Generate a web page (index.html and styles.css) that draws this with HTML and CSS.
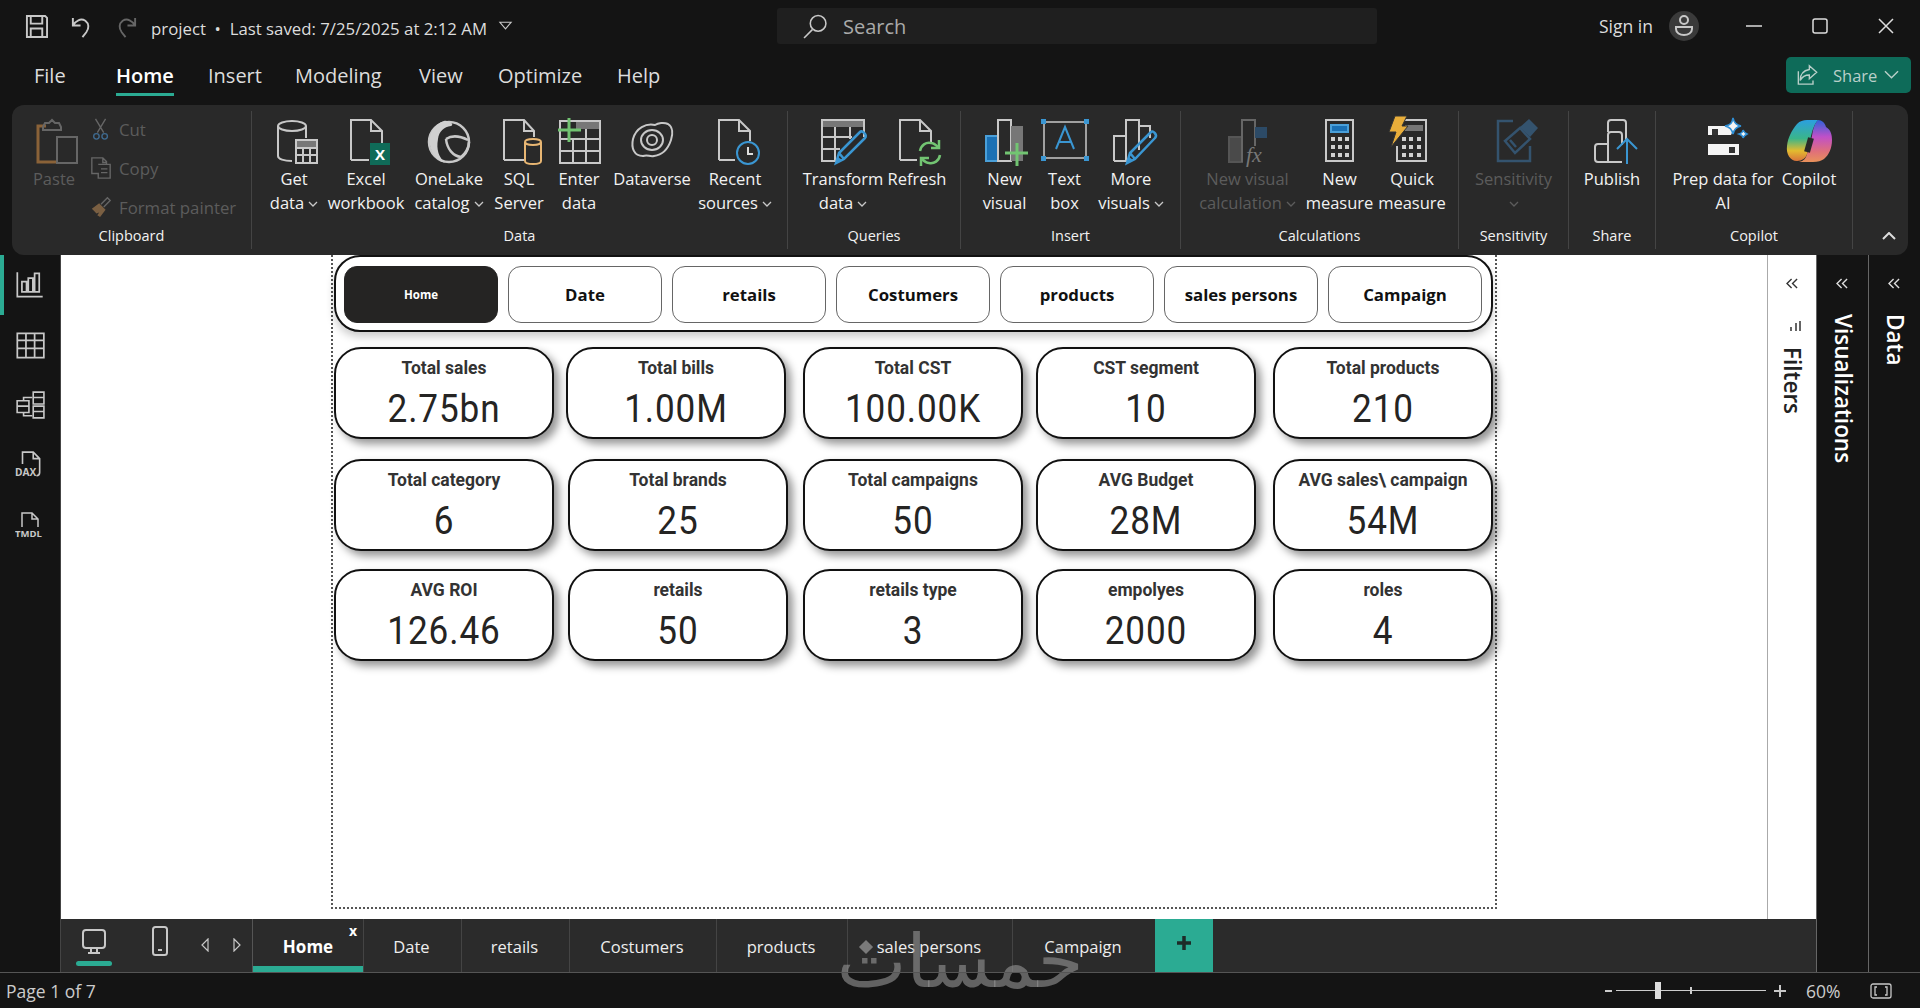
FILE: index.html
```html
<!DOCTYPE html>
<html lang="en">
<head>
  <meta charset="UTF-8">
  <title>project - Power BI Desktop</title>
  <link rel="stylesheet" href="styles.css">
</head>
<body>
  <svg class="defs" width="0" height="0">
    <defs>
      <linearGradient id="copA" x1="0" y1="0" x2="0" y2="1">
        <stop offset="0" stop-color="#2b9fe0"/><stop offset=".45" stop-color="#3ab58a"/><stop offset=".75" stop-color="#e3bb2f"/><stop offset="1" stop-color="#d9743c"/>
      </linearGradient>
      <linearGradient id="copB" x1="0" y1="0" x2="0" y2="1">
        <stop offset="0" stop-color="#2f62d8"/><stop offset=".4" stop-color="#c050c8"/><stop offset=".75" stop-color="#e0707a"/><stop offset="1" stop-color="#e8915a"/>
      </linearGradient>
    </defs>
  </svg>

  <!-- title bar -->
  <header class="titlebar">
    <div class="quick">
      <svg class="qa" viewBox="0 0 24 24"><path d="M2 1h19l2 2v20H2zM6 1v8h12V1M6 23v-9h12v9"/></svg>
      <svg class="qa" viewBox="0 0 24 24"><path d="M3 3v8h8M3 11c3-5 8-8 13-5 4 3 4 8 1 12l-4 5"/></svg>
      <svg class="qa dim" viewBox="0 0 24 24"><path d="M21 3v8h-8M21 11c-3-5-8-8-13-5-4 3-4 8-1 12l4 5"/></svg>
    </div>
    <div class="doc-name">project &nbsp;•&nbsp; Last saved: 7/25/2025 at 2:12 AM</div>
    <svg class="doc-caret" viewBox="0 0 16 10"><path d="M2 1h12L8 8z"/></svg>
    <div class="search">
      <svg viewBox="0 0 24 24"><circle cx="14.500" cy="9" r="7.500"/><path d="M9 15l-8 8"/></svg>
      <span>Search</span>
    </div>
    <div class="sign-in">Sign in</div>
    <div class="avatar">
      <svg viewBox="0 0 30 30"><circle cx="15" cy="9" r="4"/><path d="M7 16h16v2c0 4-4 6-8 6s-8-2-8-6z"/></svg>
    </div>
    <div class="win-btns">
      <svg viewBox="0 0 16 16"><path d="M0 8h16"/></svg>
      <svg viewBox="0 0 16 16"><rect x="1" y="1" width="14" height="14" rx="2"/></svg>
      <svg viewBox="0 0 16 16"><path d="M1 1l14 14M15 1L1 15"/></svg>
    </div>
  </header>

  <!-- menu tabs -->
  <nav class="menubar">
    <a class="menu-file">File</a>
    <a class="menu-home">Home</a>
    <a class="menu-insert">Insert</a>
    <a class="menu-modeling">Modeling</a>
    <a class="menu-view">View</a>
    <a class="menu-optimize">Optimize</a>
    <a class="menu-help">Help</a>
    <button class="share-btn">
      <svg viewBox="0 0 24 24"><path d="M14 2l8 7-8 7v-4c-5 0-8 2-10 6 0-7 4-11 10-12zM2 8v14h16v-4"/></svg>
      <span>Share</span>
      <svg class="share-caret" viewBox="0 0 16 10"><path d="M1 1l7 7 7-7"/></svg>
    </button>
  </nav>

  <!-- ribbon -->
  <section class="ribbon">
    <div class="group g-clipboard">
      <div class="items clip-items">
        <div class="item dim paste">
          <svg class="ri" viewBox="0 0 48 48">
            <path class="s-brown" d="M16 8H8v36h18"/>
            <path class="s-dim" d="M13 9l2-4h4l3-3 3 3h4l2 4v3H13z"/>
            <rect class="s-dim" x="27" y="19" width="20" height="26"/>
          </svg>
          <span>Paste</span>
        </div>
        <div class="clip-list">
          <div class="clip-row">
            <svg viewBox="0 0 24 24"><path class="s-dim" d="M6 1l9 15M17 1L8 16"/><circle class="s-steel" cx="7" cy="20" r="3"/><circle class="s-steel" cx="16" cy="20" r="3"/></svg>
            <span>Cut</span>
          </div>
          <div class="clip-row">
            <svg viewBox="0 0 24 24"><path class="s-dim" d="M7 1h7l4 4v3h4v15H9v-5H2V1zM14 1v5h4M9 8h9M12 13h7M12 17h7"/></svg>
            <span>Copy</span>
          </div>
          <div class="clip-row">
            <svg viewBox="0 0 24 24"><path class="f-brown" d="M2 14l8-6 7 7-6 8-3-2 2-3-3 1-2-2z"/><path class="s-dim" d="M12 9l7-7 3 3-7 7"/></svg>
            <span>Format painter</span>
          </div>
        </div>
      </div>
      <div class="group-label">Clipboard</div>
    </div>

    <div class="group g-data">
      <div class="items data-items">
        <div class="item">
          <svg class="ri" viewBox="0 0 48 48">
            <path d="M8 8v30c0 3 6 5 14 5M36 8v12"/><ellipse cx="22" cy="8" rx="14" ry="5"/>
            <rect class="f-grey" x="26" y="22" width="21" height="7"/><path d="M26 22h21v23H26zM26 30h21M26 37h21M33 29v16M40 29v16"/>
          </svg>
          <span>Get<br>data<svg class="caret" viewBox="0 0 10 6"><path d="M1 1l4 4 4-4"/></svg></span>
        </div>
        <div class="item">
          <svg class="ri" viewBox="0 0 48 48">
            <path d="M9 42V2h20l11 11v12M29 2v11h11M9 42h18"/>
            <rect class="f-excel" x="28" y="25" width="20" height="22"/>
            <text class="xl" x="38" y="42">X</text>
          </svg>
          <span>Excel<br>workbook</span>
        </div>
        <div class="item">
          <svg class="ri" viewBox="0 0 48 48">
            <circle cx="24" cy="24" r="20" stroke-width="2.500"/>
            <path class="f-light" d="M19 3C8 7 2 18 6 31c2 7 8 12 14 14-6-6-9-13-7-24 1-8 6-12 13-13 4-1-2-6-7-5z"/>
            <path d="M21 21c1 10 7 17 15 18 4-3 8-9 8-15M21 21c6-4 14-3 22 1" stroke-width="2.500"/>
          </svg>
          <span>OneLake<br>catalog<svg class="caret" viewBox="0 0 10 6"><path d="M1 1l4 4 4-4"/></svg></span>
        </div>
        <div class="item">
          <svg class="ri" viewBox="0 0 48 48">
            <path d="M9 42V2h20l10 11v6M29 2v11h10M9 42h20"/>
            <path class="s-orange" d="M30 24v19c0 2 3 3 8 3s8-1 8-3V24"/><ellipse class="s-orange" cx="38" cy="24" rx="8" ry="3"/>
          </svg>
          <span>SQL<br>Server</span>
        </div>
        <div class="item">
          <svg class="ri" viewBox="0 0 48 48">
            <rect class="f-grey" x="21" y="3" width="24" height="8"/>
            <path d="M5 45V3h40v42zM5 21h40M5 33h40M18 21v24M31 11v34"/>
            <path class="s-green" d="M14 0v24M3 12h23" stroke-width="3"/>
          </svg>
          <span>Enter<br>data</span>
        </div>
        <div class="item">
          <svg class="ri" viewBox="0 0 48 48">
            <path d="M15 38C6 38 3 30 5 21 8 10 18 5 27 7c3-2 9-3 13-1 5 3 5 10 3 16-3 9-9 15-17 16-5 1-6-2-11 0z"/>
            <ellipse cx="24" cy="22" rx="11" ry="10"/><ellipse cx="24" cy="22" rx="5" ry="5"/>
          </svg>
          <span>Dataverse</span>
        </div>
        <div class="item">
          <svg class="ri" viewBox="0 0 48 48">
            <path d="M8 42V2h20l11 11v10M28 2v11h11M8 42h16"/>
            <circle class="s-blue" cx="37" cy="35" r="11"/><path class="s-light" d="M37 29v7h5"/>
          </svg>
          <span>Recent<br>sources<svg class="caret" viewBox="0 0 10 6"><path d="M1 1l4 4 4-4"/></svg></span>
        </div>
      </div>
      <div class="group-label">Data</div>
    </div>

    <div class="group g-queries">
      <div class="items query-items">
        <div class="item">
          <svg class="ri" viewBox="0 0 48 48">
            <rect class="f-grey" x="3" y="2" width="42" height="7"/>
            <path d="M22 43H3V2h42v17M3 19h30M3 31h18M16 9v34M31 9v12"/>
            <path class="s-blue" d="M17 45l3-10 21-21c2-2 8 3 5 6L25 41zM20 35l5 6" stroke-width="2.500"/>
            <path class="f-blue" d="M17 45l2-6 4 3z"/>
          </svg>
          <span>Transform<br>data<svg class="caret" viewBox="0 0 10 6"><path d="M1 1l4 4 4-4"/></svg></span>
        </div>
        <div class="item">
          <svg class="ri" viewBox="0 0 48 48">
            <path d="M7 42V2h20l11 11v11M27 2v11h11M7 42h17"/>
            <path class="s-green" d="M27 33c1-6 6-9 11-8 3 0 5 2 7 4M47 37c-1 6-6 9-11 8-3 0-5-2-7-4" stroke-width="2.500"/>
            <path class="s-green" d="M46 22v8h-8M28 48v-8h8" stroke-width="2.500"/>
          </svg>
          <span>Refresh</span>
        </div>
      </div>
      <div class="group-label">Queries</div>
    </div>

    <div class="group g-insert">
      <div class="items insert-items">
        <div class="item">
          <svg class="ri" viewBox="0 0 48 48">
            <rect class="f-blue-dark" x="5" y="18" width="12" height="25"/>
            <path d="M17 43V2h13v41zM30 43"/>
            <rect class="f-grey" x="30" y="8" width="12" height="35"/>
            <path class="s-green" d="M36 25v23M24 35h23" stroke-width="3"/>
          </svg>
          <span>New<br>visual</span>
        </div>
        <div class="item">
          <svg class="ri" viewBox="0 0 48 48">
            <rect x="3" y="4" width="42" height="36" stroke-width="1.500"/>
            <path class="f-blue" d="M0 1h5v5H0zM43 1h5v5h-5zM0 38h5v5H0zM43 38h5v5h-5z"/>
            <path class="s-blue" d="M15 31l9-22 9 22M18 24h12"/>
          </svg>
          <span>Text<br>box</span>
        </div>
        <div class="item">
          <svg class="ri" viewBox="0 0 48 48">
            <path d="M7 43V18h12M19 43V2h13v30M32 8h11v12M7 43h12M19 43h3"/>
            <path class="s-blue" d="M20 45l3-10 21-21c2-2 7 3 4 6L28 41zM23 35l5 6" stroke-width="2.500"/>
            <path class="f-blue" d="M20 45l2-6 4 3z"/>
          </svg>
          <span>More<br>visuals<svg class="caret" viewBox="0 0 10 6"><path d="M1 1l4 4 4-4"/></svg></span>
        </div>
      </div>
      <div class="group-label">Insert</div>
    </div>

    <div class="group g-calc">
      <div class="items calc-items">
        <div class="item dim">
          <svg class="ri" viewBox="0 0 48 48">
            <rect class="f-dark" x="5" y="19" width="13" height="25"/>
            <path class="s-dim" d="M18 44V2h13v26"/>
            <rect class="f-navy" x="31" y="9" width="12" height="11"/>
            <text class="fx" x="22" y="44">fx</text>
          </svg>
          <span>New visual<br>calculation<svg class="caret" viewBox="0 0 10 6"><path d="M1 1l4 4 4-4"/></svg></span>
        </div>
        <div class="item">
          <svg class="ri" viewBox="0 0 48 48">
            <rect x="10" y="2" width="27" height="41"/>
            <rect class="f-blue-dark" x="15" y="7" width="17" height="7"/>
            <path class="f-light" d="M15 19h4v4h-4zM22 19h4v4h-4zM29 19h4v4h-4zM15 27h4v4h-4zM22 27h4v4h-4zM29 27h4v4h-4zM15 35h4v4h-4zM22 35h4v4h-4zM29 35h4v4h-4z"/>
          </svg>
          <span>New<br>measure</span>
        </div>
        <div class="item">
          <svg class="ri" viewBox="0 0 48 48">
            <path d="M12 2h26v41H9V28"/>
            <rect class="f-grey" x="17" y="7" width="18" height="6"/>
            <path class="f-light" d="M14 19h4v4h-4zM21 19h4v4h-4zM29 19h4v4h-4zM14 27h4v4h-4zM21 27h4v4h-4zM29 27h4v4h-4zM14 35h4v4h-4zM21 35h4v4h-4zM29 35h4v4h-4z"/>
            <path class="f-gold" d="M7-2h12l-5 10h6L3 29l5-15H1z"/>
          </svg>
          <span>Quick<br>measure</span>
        </div>
      </div>
      <div class="group-label">Calculations</div>
    </div>

    <div class="group g-sens">
      <div class="items one-item">
        <div class="item dim">
          <svg class="ri" viewBox="0 0 48 48">
            <path class="s-navy" d="M23 3H8v40h32V28" stroke-width="2.500"/>
            <path class="s-navy" d="M15 23l15-13 10 11-15 14zM20 22l6 7" stroke-width="2.500"/>
            <path class="f-navy-2" d="M30 9l9-8 9 9-8 9z"/>
          </svg>
          <span>Sensitivity<br><svg class="caret lone" viewBox="0 0 10 6"><path d="M1 1l4 4 4-4"/></svg></span>
        </div>
      </div>
      <div class="group-label">Sensitivity</div>
    </div>

    <div class="group g-share">
      <div class="items one-item">
        <div class="item">
          <svg class="ri" viewBox="0 0 48 48">
            <path d="M20 14V5c0-2 1-3 3-3h12c2 0 3 1 3 3v18M34 44H10c-2 0-3-1-3-3V29c0-2 1-3 3-3h5M20 44V17c0-2 1-3 3-3h8c2 0 3 1 3 3v10M20 26H10"/>
            <path class="s-blue" d="M39 46V22M29 31l10-10 10 10" stroke-width="2"/>
          </svg>
          <span>Publish</span>
        </div>
      </div>
      <div class="group-label">Share</div>
    </div>

    <div class="group g-copilot">
      <div class="items copilot-items">
        <div class="item">
          <svg class="ri" viewBox="0 0 48 48">
            <path class="f-white" d="M9 8h27l-4 9H9zM9 26h31v11H9z"/>
            <path class="f-dark-2" d="M13 11h6v6h-6zM30 29h6v6h-6z"/>
            <path class="f-white s-blue" d="M26 8c6-1 7-3 8-8 1 5 3 7 8 8-5 1-7 3-8 8-1-5-3-7-8-8z"/>
            <path class="f-white s-blue" d="M40 16c3-1 4-2 4-4 1 2 2 3 4 4-2 1-3 2-4 4 0-2-1-3-4-4z"/>
          </svg>
          <span>Prep data for<br>AI</span>
        </div>
        <div class="item">
          <svg class="ri" viewBox="0 0 48 48">
            <path fill="url(#copB)" stroke="none" d="M33 2c4 0 7 3 8 7 5 3 6 8 6 13 0 8-3 15-8 19-3 2-6 3-11 3H14c5-1 7-4 8-8l5-18c1-8 3-13 6-16z"/>
            <path fill="url(#copA)" stroke="none" d="M12 6c3-3 6-4 10-4h11c-3 3-5 8-7 16l-4 18c-1 4-5 7-10 7C5 43 1 36 2 28c1-9 5-16 10-22z"/>
            <path class="s-ribbon" d="M26 20l-4 14"/>
          </svg>
          <span>Copilot</span>
        </div>
      </div>
      <div class="group-label">Copilot</div>
    </div>

    <div class="collapse-wrap">
      <svg viewBox="0 0 14 8"><path d="M1 7l6-6 6 6"/></svg>
    </div>
  </section>

  <main class="workspace">
    <aside class="sidebar">
      <div class="side-icon active">
        <svg viewBox="0 0 26 26"><path d="M2 2v21h22M6 19V10h4v9zM11.500 19V7h4v12zM17 19V3h4v16z"/></svg>
      </div>
      <div class="side-icon">
        <svg viewBox="0 0 26 26"><path d="M2 3h23v21H2zM2 9h23M2 16h23M9.500 3v21M17 3v21"/></svg>
      </div>
      <div class="side-icon">
        <svg viewBox="0 0 28 28"><path d="M2 10h11v11H2zM2 15h11M8 10V7h8M8 21v3h8M17 2h10v11H17zM17 7h10M17 15h10v11H17zM17 20h10"/></svg>
      </div>
      <div class="side-icon">
        <svg viewBox="0 0 28 28"><path d="M7 13V2h10l6 6v13c0 2-1 3-3 3M17 2v6h6"/><text class="side-tag" x="0" y="24">DAX</text></svg>
      </div>
      <div class="side-icon">
        <svg viewBox="0 0 30 28"><path d="M7 16V2h10l6 6v8M17 2v6h6"/><text class="side-tag" x="0" y="26">TMDL</text></svg>
      </div>
    </aside>

    <div class="center">
      <div class="canvas-row">
        <div class="canvas">
          <div class="page-frame">
            <div class="page-nav">
              <div class="nav-btn current">Home</div>
              <div class="nav-btn">Date</div>
              <div class="nav-btn">retails</div>
              <div class="nav-btn">Costumers</div>
              <div class="nav-btn">products</div>
              <div class="nav-btn">sales persons</div>
              <div class="nav-btn">Campaign</div>
            </div>
            <div class="kpi-row row-a first">
              <div class="card"><p>Total sales</p><strong>2.75bn</strong></div>
              <div class="card"><p>Total bills</p><strong>1.00M</strong></div>
              <div class="card"><p>Total CST</p><strong>100.00K</strong></div>
              <div class="card"><p>CST segment</p><strong>10</strong></div>
              <div class="card"><p>Total products</p><strong>210</strong></div>
            </div>
            <div class="kpi-row row-b second">
              <div class="card"><p>Total category</p><strong>6</strong></div>
              <div class="card"><p>Total brands</p><strong>25</strong></div>
              <div class="card"><p>Total campaigns</p><strong>50</strong></div>
              <div class="card"><p>AVG Budget</p><strong>28M</strong></div>
              <div class="card"><p>AVG sales\ campaign</p><strong>54M</strong></div>
            </div>
            <div class="kpi-row row-b third">
              <div class="card"><p>AVG ROI</p><strong>126.46</strong></div>
              <div class="card"><p>retails</p><strong>50</strong></div>
              <div class="card"><p>retails type</p><strong>3</strong></div>
              <div class="card"><p>empolyes</p><strong>2000</strong></div>
              <div class="card"><p>roles</p><strong>4</strong></div>
            </div>
          </div>
        </div>
        <div class="filters">
          <svg class="dbl dark" viewBox="0 0 14 12"><path d="M6 1L1 6l5 5M12 1L7 6l5 5"/></svg>
          <svg class="filter-mini" viewBox="0 0 12 12"><path d="M11 1v10M7 3v8M2 7v4"/></svg>
          <span class="vtext">Filters</span>
        </div>
      </div>

      <div class="tabs">
        <div class="tab-tools">
          <div class="device desktop">
            <svg viewBox="0 0 26 28"><rect x="2" y="2" width="22" height="18" rx="3"/><path d="M10 20v4M16 20v4M7 25h12"/></svg>
          </div>
          <div class="device phone">
            <svg viewBox="0 0 18 30"><rect x="2" y="1" width="14" height="28" rx="2.500"/><path d="M7 24h4"/></svg>
          </div>
          <svg class="arrow" viewBox="0 0 8 14"><path d="M7 1L1 7l6 6z"/></svg>
          <svg class="arrow" viewBox="0 0 8 14"><path d="M1 1l6 6-6 6z"/></svg>
        </div>
        <div class="tab t-home">Home<i>x</i></div>
        <div class="tab t-date">Date</div>
        <div class="tab t-retails">retails</div>
        <div class="tab t-cost">Costumers</div>
        <div class="tab t-prod">products</div>
        <div class="tab t-sales">sales persons</div>
        <div class="tab t-camp">Campaign</div>
        <div class="tab-add">
          <svg viewBox="0 0 16 16"><path d="M8 1v14M1 8h14"/></svg>
        </div>
        <div class="watermark"><span class="wm-dot"></span><span lang="ar" dir="rtl">خمسات</span></div>
      </div>
    </div>

    <aside class="pane">
      <svg class="dbl" viewBox="0 0 14 12"><path d="M6 1L1 6l5 5M12 1L7 6l5 5"/></svg>
      <span class="vtext">Visualizations</span>
    </aside>
    <aside class="pane">
      <svg class="dbl" viewBox="0 0 14 12"><path d="M6 1L1 6l5 5M12 1L7 6l5 5"/></svg>
      <span class="vtext">Data</span>
    </aside>
  </main>

  <footer class="statusbar">
    <span class="page-count">Page 1 of 7</span>
    <div class="zoom-ctl">
      <span class="zoom-minus"></span>
      <div class="zoom-track"><span class="zoom-tick"></span><span class="zoom-thumb"></span></div>
      <svg class="zoom-plus" viewBox="0 0 12 12"><path d="M6 0v12M0 6h12"/></svg>
      <span class="zoom-pct">60%</span>
      <svg class="fit" viewBox="0 0 22 16"><rect x="1" y="1" width="20" height="14" rx="2"/><path d="M7 4H5v8h2M15 4h2v8h-2"/></svg>
    </div>
  </footer>
</body>
</html>
```

FILE: styles.css
```css
* {
  box-sizing: border-box;
}
html, body {
  margin: 0;
  height: 100%;
}
body {
  width: 1920px;
  height: 1008px;
  overflow: hidden;
  display: flex;
  flex-direction: column;
  background: #141414;
  color: #eee;
  font-family: "Open Sans", "Noto Sans", sans-serif;
}
svg {
  display: block;
  fill: none;
  stroke: #c8c8c8;
  stroke-width: 2;
}
.defs {
  position: absolute;
}

/* title bar */
.titlebar {
  height: 52px;
  flex: none;
  display: flex;
  align-items: center;
  padding-left: 25px;
}
.quick {
  display: flex;
  gap: 22px;
}
.qa {
  width: 23px;
  height: 23px;
}
.qa.dim {
  stroke: #666;
}
.doc-name {
  margin-left: 13px;
  padding-top: 4px;
  width: 341px;
  font-size: 16.800px;
  color: #ddd;
  white-space: nowrap;
}
.doc-caret {
  width: 15px;
  height: 10px;
  margin: 0 0 0 6px;
  stroke-width: 1.200;
}
.search {
  margin-left: 264px;
  width: 600px;
  height: 36px;
  background: #1f1f1f;
  border-radius: 3px;
  display: flex;
  align-items: center;
  padding-left: 26px;
  color: #aaa;
  font-size: 20px;
}
.search svg {
  width: 25px;
  height: 25px;
  stroke-width: 1.500;
  margin-right: 15px;
}
.sign-in {
  margin-left: 222px;
  width: 62px;
  font-size: 17.500px;
  color: #ddd;
  white-space: nowrap;
}
.avatar {
  width: 30px;
  height: 30px;
  margin-left: 8px;
  border-radius: 50%;
  background: #3a3a3a;
}
.win-btns {
  display: flex;
  gap: 50px;
  margin-left: 47px;
}
.win-btns svg {
  width: 16px;
  height: 16px;
  stroke: #ddd;
  stroke-width: 1.500;
}

/* menu */
.menubar {
  height: 53px;
  flex: none;
  position: relative;
  display: flex;
  font-size: 20px;
  color: #ddd;
  line-height: 48px;
}
.menubar a {
  height: 44px;
}
.menu-file { margin-left: 34px; width: 82px; }
.menu-home {
  width: 58px;
  margin-right: 34px;
  font-weight: 600;
  color: #fff;
  border-bottom: 3px solid #2bab93;
  white-space: nowrap;
}
.menu-insert { width: 87px; }
.menu-modeling { width: 124px; }
.menu-view { width: 79px; }
.menu-optimize { width: 119px; }
.share-btn {
  position: absolute;
  left: 1786px;
  top: 5px;
  width: 125px;
  height: 36px;
  border: 0;
  border-radius: 5px;
  background: #0e6b59;
  color: #b9cfc9;
  font: 16.500px "Open Sans", sans-serif;
  display: flex;
  align-items: center;
  padding-left: 10px;
}
.share-btn svg {
  width: 23px;
  height: 22px;
  stroke: #b9cfc9;
  stroke-width: 1.500;
  margin-right: 14px;
}
.share-btn .share-caret {
  width: 15px;
  height: 10px;
  margin: 0 0 0 7px;
}

/* ribbon */
.ribbon {
  height: 150px;
  flex: none;
  margin: 0 12px;
  padding: 6px 0;
  background: #292929;
  border-radius: 12px;
  display: flex;
}
.group {
  flex: none;
  height: 138px;
  padding-top: 7px;
  border-right: 1px solid #444;
  display: flex;
  flex-direction: column;
}
.g-clipboard { width: 240px; }
.g-data { width: 536px; }
.g-queries { width: 173px; }
.g-insert { width: 220px; }
.g-calc { width: 278px; }
.g-sens { width: 110px; }
.g-share { width: 87px; }
.g-copilot { width: 197px; }
.items {
  height: 98px;
  display: grid;
}
.clip-items {
  grid-template-columns: 48px 1fr;
  column-gap: 12px;
  padding-left: 18px;
}
.data-items {
  grid-template-columns: 56px 88px 78px 62px 58px 88px 78px;
  padding-left: 14px;
}
.query-items {
  grid-template-columns: 86px 62px;
  padding-left: 12px;
}
.insert-items {
  grid-template-columns: 57px 63px 70px;
  padding-left: 15px;
}
.calc-items {
  grid-template-columns: 115px 69px 76px;
  padding-left: 9px;
}
.one-item {
  grid-template-columns: 1fr;
}
.copilot-items {
  grid-template-columns: 110px 62px;
  padding-left: 12px;
}
.item {
  display: flex;
  flex-direction: column;
  align-items: center;
  font-size: 16.500px;
  line-height: 24px;
  text-align: center;
  color: #f2f2f2;
  white-space: nowrap;
}
.item span {
  margin-top: 1px;
}
.item.dim {
  color: #5c5c5c;
}
.ri {
  width: 48px;
  height: 48px;
  flex: none;
  overflow: visible;
}
.caret {
  display: inline-block;
  width: 10px;
  height: 6px;
  margin-left: 4px;
  vertical-align: 2px;
  stroke-width: 1.300;
}
.dim .caret {
  stroke: #5c5c5c;
}
.caret.lone {
  margin-left: 0;
}
.group-label {
  margin-top: 10px;
  text-align: center;
  font-size: 14.500px;
  line-height: 20px;
  color: #f2f2f2;
}
.clip-list {
  display: flex;
  flex-direction: column;
  gap: 15px;
  margin-top: -1px;
}
.clip-row {
  display: flex;
  align-items: center;
  gap: 7px;
  height: 24px;
  font-size: 16.800px;
  color: #5c5c5c;
  white-space: nowrap;
}
.clip-row svg {
  width: 22px;
  height: 24px;
  flex: none;
  stroke-width: 1.500;
}
.collapse-wrap {
  flex: 1;
  display: flex;
  justify-content: center;
  padding: 121px 0 0 16px;
}
.collapse-wrap svg {
  width: 14px;
  height: 8px;
  stroke: #ddd;
}

/* icon paint */
.s-brown { stroke: #8a6238; stroke-width: 3; }
.s-dim { stroke: #666; }
.s-steel { stroke: #3f6a8f; }
.s-orange { stroke: #e8b673; }
.s-green { stroke: #72c472; }
.s-blue { stroke: #3a96d2; }
.s-light { stroke: #ddd; }
.s-navy { stroke: #34536e; }
.s-ribbon { stroke: #292929; stroke-width: 6; }
.f-brown { fill: #7a5f42; stroke: none; }
.f-grey { fill: #777; stroke: none; }
.f-excel { fill: #0f6b58; stroke: none; }
.f-light { fill: #d0d0d0; stroke: none; }
.f-blue { fill: #3a96d2; stroke: none; }
.f-blue-dark { fill: #1a70b4; stroke: #4a9fd8; }
.f-dark { fill: #4a4a4a; stroke: #555; }
.f-navy { fill: #2c4a66; stroke: none; }
.f-navy-2 { fill: #34536e; stroke: none; }
.f-gold { fill: #e9ae3a; stroke: #333; stroke-width: 1; }
.f-white { fill: #f4f4f4; stroke: none; }
.f-dark-2 { fill: #333; stroke: none; }
.f-white.s-blue { stroke: #2f8fd6; stroke-width: 1.500; }
.xl {
  fill: #fff;
  stroke: none;
  font: 700 15px "Open Sans", sans-serif;
  text-anchor: middle;
}
.fx {
  fill: #777;
  stroke: none;
  font: italic 22px "Liberation Serif", serif;
}

/* workspace */
.workspace {
  flex: 1;
  min-height: 0;
  display: flex;
}
.sidebar {
  width: 61px;
  flex: none;
  border-right: 1px solid #444;
  padding-top: 5px;
  display: flex;
  flex-direction: column;
}
.side-icon {
  height: 60px;
  display: flex;
  align-items: center;
  justify-content: center;
}
.side-icon svg {
  width: 30px;
  height: 30px;
  stroke-width: 1.500;
}
.side-icon.active {
  margin-top: -5px;
  box-shadow: inset 4px 0 0 #2bab93;
}
.side-tag {
  fill: #c8c8c8;
  stroke: none;
  font: 700 9.500px "Open Sans", sans-serif;
}
.center {
  flex: 1;
  min-width: 0;
  display: flex;
  flex-direction: column;
}
.canvas-row {
  flex: 1;
  min-height: 0;
  display: flex;
  background: #fff;
}
.canvas {
  flex: 1;
  padding-left: 270px;
}
.page-frame {
  width: 1166px;
  height: 654px;
  border: 2px dotted #555;
  border-top: 0;
  padding-left: 1px;
}
.page-nav {
  width: 1159px;
  height: 77px;
  padding: 10px 8px 0;
  display: flex;
  gap: 10px;
  background: #fff;
  border: 2.500px solid #111;
  border-radius: 26px;
  box-shadow: 0 5px 8px rgba(0, 0, 0, .2);
}
.nav-btn {
  width: 154px;
  height: 57px;
  margin-top: -1px;
  flex: none;
  display: flex;
  align-items: center;
  justify-content: center;
  border: 1px solid #666;
  border-radius: 13px;
  color: #111;
  font-size: 16.800px;
  font-weight: 700;
}
.nav-btn.current {
  background: #252423;
  border-color: #252423;
  color: #fff;
  font-size: 11.500px;
}
.kpi-row {
  display: grid;
  height: 92px;
}
.row-a {
  grid-template-columns: 232px 237px 233px 237px 220px;
}
.row-b {
  grid-template-columns: 234px 235px 233px 237px 220px;
}
.first { margin-top: 15px; }
.second { margin-top: 20px; }
.third { margin-top: 18px; }
.card {
  width: 220px;
  height: 92px;
  background: #fff;
  border: 2px solid #111;
  border-radius: 27px;
  box-shadow: 5px 5px 9px rgba(0, 0, 0, .42);
  text-align: center;
  color: #333;
  font-family: Roboto, "Open Sans", sans-serif;
}
.card p {
  margin: 7px 0 0;
  font-size: 17.500px;
  line-height: 24px;
  font-weight: 700;
}
.card strong {
  display: block;
  margin-top: 7px;
  font-size: 39px;
  line-height: 44px;
  font-weight: 400;
  letter-spacing: 1px;
  color: #252423;
  transform: scaleX(.9);
}
.filters {
  width: 49px;
  flex: none;
  border-left: 1px solid #aaa;
  padding-top: 23px;
  display: flex;
  flex-direction: column;
  align-items: center;
  color: #222;
}
.dbl {
  width: 13px;
  height: 11px;
  stroke: #ddd;
  stroke-width: 1.500;
  flex: none;
}
.dbl.dark {
  stroke: #333;
}
.filter-mini {
  width: 12px;
  height: 12px;
  margin: 31px 0 0 6px;
  stroke: #333;
  stroke-width: 1.500;
}
.vtext {
  writing-mode: vertical-rl;
  font-size: 22.500px;
  font-weight: 600;
  line-height: 24px;
}
.filters .vtext {
  margin-top: 15px;
}
.pane {
  width: 52px;
  flex: none;
  border-left: 1px solid #666;
  padding-top: 23px;
  display: flex;
  flex-direction: column;
  align-items: center;
  color: #fff;
}
.pane .vtext {
  margin-top: 25px;
}

/* page tabs */
.tabs {
  height: 53px;
  flex: none;
  position: relative;
  display: flex;
  background: #2b2b2b;
  font-size: 16.500px;
  color: #eee;
}
.tab-tools {
  width: 192px;
  flex: none;
  position: relative;
  display: flex;
  align-items: flex-start;
  border-right: 1px solid #555;
}
.device {
  flex: none;
}
.desktop {
  margin: 9px 0 0 20px;
  width: 26px;
}
.desktop svg {
  width: 26px;
  height: 28px;
}
.desktop::after {
  content: "";
  display: block;
  width: 36px;
  height: 5px;
  margin: 5px 0 0 -5px;
  border-radius: 3px;
  background: #2bab93;
}
.phone {
  margin: 7px 0 0 44px;
}
.phone svg {
  width: 18px;
  height: 30px;
}
.arrow {
  width: 8px;
  height: 14px;
  flex: none;
  margin-top: 19px;
  stroke-width: 1.200;
}
.arrow:nth-of-type(1) {
  margin-left: 32px;
}
.arrow:nth-of-type(2) {
  margin-left: 24px;
}
.tab {
  flex: none;
  display: flex;
  align-items: center;
  justify-content: center;
  padding: 1px 2px 0 0;
  border-right: 1px solid #444;
  white-space: nowrap;
}
.t-home {
  width: 111px;
  padding-right: 0;
  position: relative;
  font-size: 17px;
  font-weight: 700;
  color: #fff;
  box-shadow: inset 0 -6px 0 #2bab93;
}
.t-home i {
  position: absolute;
  right: 6px;
  top: 3px;
  font-style: normal;
  font-size: 14px;
  line-height: 18px;
}
.t-date { width: 98px; }
.t-retails { width: 108px; }
.t-cost { width: 147px; }
.t-prod { width: 131px; }
.t-sales { width: 165px; }
.t-camp { width: 142px; border-right: 0; }
.tab-add {
  width: 58px;
  flex: none;
  display: flex;
  align-items: center;
  justify-content: center;
  padding-bottom: 6px;
  background: #2bab93;
}
.tab-add svg {
  width: 16px;
  height: 16px;
  stroke: #1d2b28;
  stroke-width: 3.500;
}
.watermark {
  position: absolute;
  left: 784px;
  top: 14px;
  width: 230px;
  height: 57px;
  display: flex;
  justify-content: center;
  align-items: center;
  color: rgba(150, 150, 150, .6);
  font: 400 74px/57px "DejaVu Sans", sans-serif;
  pointer-events: none;
}
.wm-dot {
  position: absolute;
  left: 16px;
  top: 9px;
  width: 10px;
  height: 10px;
  background: rgba(150, 150, 150, .75);
  transform: rotate(45deg);
}

/* status bar */
.statusbar {
  height: 36px;
  flex: none;
  border-top: 1px solid #555;
  display: flex;
  align-items: center;
  padding-left: 6px;
  font-size: 17.500px;
  color: #ccc;
  position: relative;
}
.zoom-ctl {
  margin-left: auto;
  display: flex;
  align-items: center;
}
.zoom-minus {
  width: 7px;
  height: 2px;
  background: #ccc;
}
.zoom-track {
  width: 150px;
  height: 1px;
  margin-left: 4px;
  background: #ccc;
  position: relative;
}
.zoom-thumb {
  position: absolute;
  left: 39px;
  top: -8px;
  width: 6px;
  height: 17px;
  background: #ddd;
}
.zoom-tick {
  position: absolute;
  left: 74px;
  top: -3px;
  width: 2px;
  height: 7px;
  background: #ccc;
}
.zoom-plus {
  width: 12px;
  height: 12px;
  margin-left: 8px;
}
.zoom-pct {
  margin-left: 20px;
  width: 64px;
}
.fit {
  width: 22px;
  height: 16px;
  margin-right: 28px;
  stroke-width: 1.300;
}
```
